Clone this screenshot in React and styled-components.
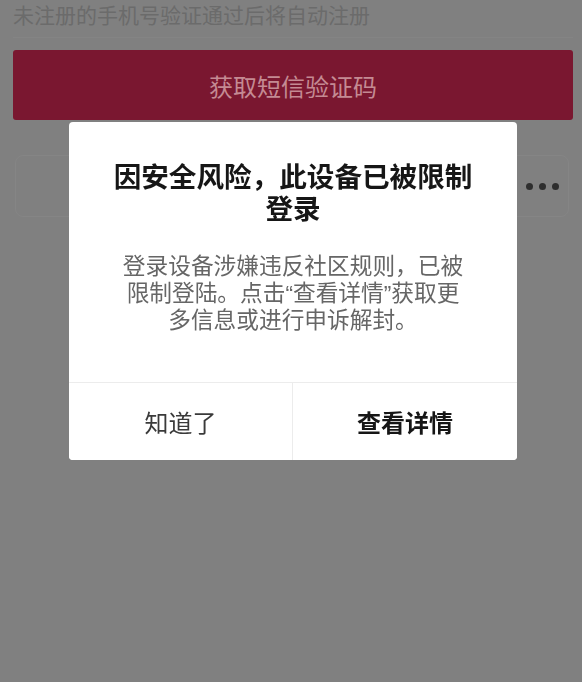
import styled, { createGlobalStyle } from "styled-components";

const GlobalStyle = createGlobalStyle`
  html, body {
    margin: 0;
    padding: 0;
    background: #808080;
  }
  body {
    font-family: "Noto Sans CJK SC", "Noto Sans", sans-serif;
  }
`;

const Page = styled.div`
  width: 582px;
  height: 682px;
  background: #808080;
  padding: 2px 9px 0 13px;
  box-sizing: border-box;
  overflow: hidden;
`;

const Hint = styled.div`
  font-size: 21px;
  line-height: 24px;
  color: #6b6b6b;
  padding-bottom: 11px;
  border-bottom: 1px solid #848484;
`;

const SmsButton = styled.div`
  margin-top: 12px;
  height: 70px;
  border-radius: 3px;
  background: #7a1730;
  color: #c48a93;
  font-size: 24px;
  display: flex;
  align-items: center;
  justify-content: center;
`;

const OtherRow = styled.div`
  margin: 35px 4px 0 2px;
  height: 60px;
  border: 1px solid #858585;
  border-radius: 8px;
  display: flex;
  align-items: center;
  justify-content: flex-end;
  padding-right: 9px;
  gap: 6px;
`;

const Dot = styled.span`
  width: 7px;
  height: 7px;
  border-radius: 50%;
  background: #2e2e2e;
`;

const Overlay = styled.div`
  position: fixed;
  inset: 0;
  display: flex;
  justify-content: center;
  align-items: flex-start;
  padding-top: 122px;
  padding-left: 4px;
`;

const Dialog = styled.div`
  width: 448px;
  background: #fff;
  border-radius: 4px;
  overflow: hidden;
  display: flex;
  flex-direction: column;
`;

const Title = styled.h2`
  margin: 0;
  padding: 37px 38px 0;
  font-size: 27.6px;
  line-height: 32px;
  font-weight: 700;
  color: #161616;
  text-align: center;
`;

const Body = styled.p`
  margin: 0;
  padding: 30px 49px 48px;
  font-family: "Liberation Sans", "Noto Sans CJK SC", sans-serif;
  font-size: 22.7px;
  line-height: 27px;
  color: #666;
  text-align: center;
`;

const Actions = styled.div`
  display: grid;
  grid-template-columns: 223px 1fr;
  border-top: 1px solid #ececec;
  height: 77px;
`;

const Action = styled.button`
  border: none;
  background: #fff;
  font-family: inherit;
  font-size: 24px;
  font-weight: ${(p) => (p.$primary ? 700 : 400)};
  color: ${(p) => (p.$primary ? "#161616" : "#3a3a3a")};
  border-left: ${(p) => (p.$primary ? "1px solid #ececec" : "none")};
  padding: 0;
  cursor: pointer;
`;

export default function App() {
  return (
    <>
      <GlobalStyle />
      <Page>
        <Hint>未注册的手机号验证通过后将自动注册</Hint>
        <SmsButton>获取短信验证码</SmsButton>
        <OtherRow>
          <Dot />
          <Dot />
          <Dot />
        </OtherRow>
      </Page>
      <Overlay>
        <Dialog>
          <Title>因安全风险，此设备已被限制登录</Title>
          <Body>
            登录设备涉嫌违反社区规则，已被限制登陆。点击“查看详情”获取更多信息或进行申诉解封。
          </Body>
          <Actions>
            <Action>知道了</Action>
            <Action $primary>查看详情</Action>
          </Actions>
        </Dialog>
      </Overlay>
    </>
  );
}
